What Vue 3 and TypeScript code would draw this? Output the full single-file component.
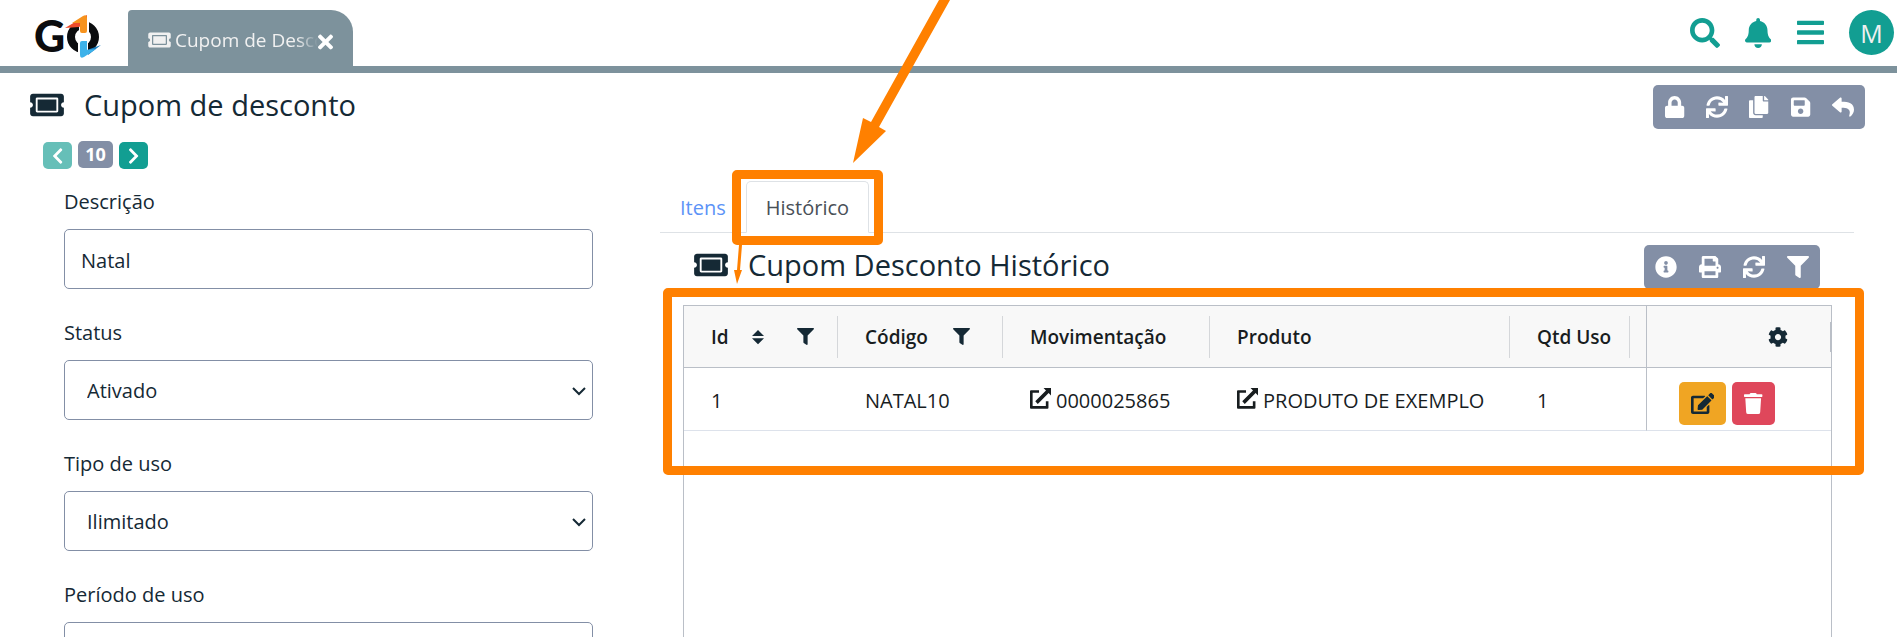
<script setup lang="ts">
import { ref } from 'vue'

interface Icon { w: number; d: string }

const icons: Record<string, Icon> = {
  ticket: { w: 576, d: 'M128 160h320v192H128V160zm400 96c0 26.51 21.49 48 48 48v96c0 26.51-21.49 48-48 48H48c-26.51 0-48-21.49-48-48v-96c26.51 0 48-21.49 48-48s-21.49-48-48-48v-96c0-26.51 21.49-48 48-48h480c26.51 0 48 21.49 48 48v96c-26.51 0-48 21.49-48 48zm-48-104c0-13.255-10.745-24-24-24H120c-13.255 0-24 10.745-24 24v208c0 13.255 10.745 24 24 24h336c13.255 0 24-10.745 24-24V152z' },
  close: { w: 352, d: 'M242.72 256l100.07-100.07c12.28-12.28 12.28-32.19 0-44.48l-22.24-22.24c-12.28-12.28-32.19-12.28-44.48 0L176 189.28 75.93 89.21c-12.28-12.28-32.19-12.28-44.48 0L9.21 111.45c-12.28 12.28-12.28 32.19 0 44.48L109.28 256 9.21 356.07c-12.28 12.28-12.28 32.19 0 44.48l22.24 22.24c12.28 12.28 32.2 12.28 44.48 0L176 322.72l100.07 100.07c12.28 12.28 32.2 12.28 44.48 0l22.24-22.24c12.28-12.28 12.28-32.19 0-44.48L242.72 256z' },
  search: { w: 512, d: 'M505 442.7L405.3 343c-4.5-4.5-10.6-7-17-7H372c27.6-35.3 44-79.7 44-128C416 93.1 322.9 0 208 0S0 93.1 0 208s93.1 208 208 208c48.3 0 92.7-16.4 128-44v16.3c0 6.4 2.5 12.5 7 17l99.7 99.7c9.4 9.4 24.6 9.4 33.9 0l28.3-28.3c9.4-9.4 9.4-24.6.1-34zM208 336c-70.7 0-128-57.2-128-128 0-70.7 57.2-128 128-128 70.7 0 128 57.2 128 128 0 70.7-57.2 128-128 128z' },
  bell: { w: 448, d: 'M224 512c35.32 0 63.97-28.65 63.97-64H160.03c0 35.35 28.65 64 63.97 64zm215.39-149.71c-19.32-20.76-55.47-51.99-55.47-154.29 0-77.7-54.48-139.9-127.94-155.16V32c0-17.67-14.32-32-31.98-32s-31.98 14.33-31.98 32v20.84C118.56 68.1 64.08 130.3 64.08 208c0 102.3-36.15 133.53-55.47 154.29-6 6.45-8.66 14.16-8.61 21.71.11 16.4 12.98 32 32.1 32h383.8c19.12 0 32-15.6 32.1-32 .05-7.55-2.61-15.27-8.61-21.71z' },
  bars: { w: 448, d: 'M16 132h416c8.837 0 16-7.163 16-16V76c0-8.837-7.163-16-16-16H16C7.163 60 0 67.163 0 76v40c0 8.837 7.163 16 16 16zm0 160h416c8.837 0 16-7.163 16-16v-40c0-8.837-7.163-16-16-16H16c-8.837 0-16 7.163-16 16v40c0 8.837 7.163 16 16 16zm0 160h416c8.837 0 16-7.163 16-16v-40c0-8.837-7.163-16-16-16H16c-8.837 0-16 7.163-16 16v40c0 8.837 7.163 16 16 16z' },
  lock: { w: 448, d: 'M400 224h-24v-72C376 68.2 307.8 0 224 0S72 68.2 72 152v72H48c-26.5 0-48 21.5-48 48v192c0 26.5 21.5 48 48 48h352c26.5 0 48-21.5 48-48V272c0-26.5-21.5-48-48-48zm-104 0H152v-72c0-39.7 32.3-72 72-72s72 32.3 72 72v72z' },
  sync: { w: 512, d: 'M440.65 12.57l4 82.77A247.16 247.16 0 0 0 255.83 8C134.73 8 33.91 94.92 12.29 209.82A12 12 0 0 0 24.09 224h49.05a12 12 0 0 0 11.67-9.26 175.91 175.91 0 0 1 317-56.94l-101.46-4.86a12 12 0 0 0-12.57 12v47.41a12 12 0 0 0 12 12H500a12 12 0 0 0 12-12V12a12 12 0 0 0-12-12h-47.37a12 12 0 0 0-11.98 12.57zM255.83 432a175.61 175.61 0 0 1-146-77.8l101.8 4.87a12 12 0 0 0 12.57-12v-47.4a12 12 0 0 0-12-12H12a12 12 0 0 0-12 12V500a12 12 0 0 0 12 12h47.35a12 12 0 0 0 12-12.6l-4.15-82.57A247.17 247.17 0 0 0 255.83 504c121.11 0 221.93-86.92 243.55-201.82a12 12 0 0 0-11.8-14.18h-49.05a12 12 0 0 0-11.67 9.26A175.86 175.86 0 0 1 255.83 432z' },
  copy: { w: 448, d: 'M320 448v40c0 13.255-10.745 24-24 24H24c-13.255 0-24-10.745-24-24V120c0-13.255 10.745-24 24-24h72v296c0 30.879 25.121 56 56 56h168zm0-344V0H152c-13.255 0-24 10.745-24 24v368c0 13.255 10.745 24 24 24h272c13.255 0 24-10.745 24-24V128H344c-13.2 0-24-10.8-24-24zm120.971-31.029L375.029 7.029A24 24 0 0 0 358.059 0H352v96h96v-6.059a24 24 0 0 0-7.029-16.97z' },
  save: { w: 448, d: 'M433.941 129.941l-83.882-83.882A48 48 0 0 0 316.118 32H48C21.49 32 0 53.49 0 80v352c0 26.51 21.49 48 48 48h352c26.51 0 48-21.49 48-48V163.882a48 48 0 0 0-14.059-33.941zM224 416c-35.346 0-64-28.654-64-64 0-35.346 28.654-64 64-64s64 28.654 64 64c0 35.346-28.654 64-64 64zm96-304.52V212c0 6.627-5.373 12-12 12H76c-6.627 0-12-5.373-12-12V108c0-6.627 5.373-12 12-12h228.52c3.183 0 6.235 1.264 8.485 3.515l3.48 3.48A11.996 11.996 0 0 1 320 111.48z' },
  reply: { w: 512, d: 'M8.309 189.836L184.313 37.851C199.719 24.546 224 35.347 224 56.015v80.053c160.629 1.839 288 34.032 288 186.258 0 61.441-39.581 122.309-83.333 154.132-13.653 9.931-33.111-2.533-28.077-18.631 45.344-145.012-21.507-183.51-176.59-185.742V360c0 20.7-24.3 31.453-39.687 18.164l-176.004-152c-11.071-9.562-11.086-26.753 0-36.328z' },
  left: { w: 320, d: 'M34.52 239.03L228.87 44.69c9.37-9.37 24.57-9.37 33.94 0l22.67 22.67c9.36 9.36 9.37 24.52.04 33.9L131.49 256l154.02 154.75c9.34 9.38 9.32 24.54-.04 33.9l-22.67 22.67c-9.37 9.37-24.57 9.37-33.94 0L34.52 272.97c-9.37-9.37-9.37-24.57 0-33.94z' },
  right: { w: 320, d: 'M285.476 272.971L91.132 467.314c-9.373 9.373-24.569 9.373-33.941 0l-22.667-22.667c-9.357-9.357-9.375-24.522-.04-33.901L188.505 256 34.484 101.255c-9.335-9.379-9.317-24.544.04-33.901l22.667-22.667c9.373-9.373 24.569-9.373 33.941 0L285.475 239.03c9.373 9.372 9.373 24.568.001 33.941z' },
  info: { w: 512, d: 'M256 8C119.043 8 8 119.083 8 256c0 136.997 111.043 248 248 248s248-111.003 248-248C504 119.083 392.957 8 256 8zm0 110c23.196 0 42 18.804 42 42s-18.804 42-42 42-42-18.804-42-42 18.804-42 42-42zm56 254c0 6.627-5.373 12-12 12h-88c-6.627 0-12-5.373-12-12v-24c0-6.627 5.373-12 12-12h12v-64h-12c-6.627 0-12-5.373-12-12v-24c0-6.627 5.373-12 12-12h64c6.627 0 12 5.373 12 12v100h12c6.627 0 12 5.373 12 12v24z' },
  print: { w: 512, d: 'M448 192V77.25c0-8.49-3.37-16.62-9.37-22.63L393.37 9.37c-6-6-14.14-9.37-22.63-9.37H96C78.33 0 64 14.33 64 32v160c-35.35 0-64 28.65-64 64v112c0 8.84 7.16 16 16 16h48v96c0 17.67 14.33 32 32 32h320c17.67 0 32-14.33 32-32v-96h48c8.84 0 16-7.16 16-16V256c0-35.35-28.65-64-64-64zm-64 256H128v-96h256v96zm0-224H128V64h192v48c0 8.84 7.16 16 16 16h48v96zm48 72c-13.25 0-24-10.75-24-24 0-13.26 10.75-24 24-24s24 10.74 24 24c0 13.25-10.75 24-24 24z' },
  filter: { w: 512, d: 'M487.976 0H24.028C2.71 0-8.047 25.866 7.058 40.971L192 225.941V432c0 7.831 3.821 15.17 10.237 19.662l80 55.98C298.02 518.69 320 507.493 320 487.98V225.941l184.947-184.97C520.021 25.896 509.338 0 487.976 0z' },
  cog: { w: 512, d: 'M487.4 315.7l-42.6-24.6c4.3-23.2 4.3-47 0-70.2l42.6-24.6c4.9-2.8 7.1-8.6 5.5-14-11.1-35.6-30-67.8-54.7-94.6-3.8-4.1-10-5.1-14.8-2.3L380.8 110c-17.9-15.4-38.5-27.3-60.8-35.1V25.8c0-5.6-3.9-10.5-9.4-11.7-36.7-8.2-74.3-7.8-109.2 0-5.5 1.2-9.4 6.1-9.4 11.7V75c-22.2 7.9-42.8 19.8-60.8 35.1L88.7 85.5c-4.9-2.8-11-1.9-14.8 2.3-24.7 26.7-43.6 58.9-54.7 94.6-1.7 5.4.6 11.2 5.5 14L67.3 221c-4.3 23.2-4.3 47 0 70.2l-42.6 24.6c-4.9 2.8-7.1 8.6-5.5 14 11.1 35.6 30 67.8 54.7 94.6 3.8 4.1 10 5.1 14.8 2.3l42.6-24.6c17.9 15.4 38.5 27.3 60.8 35.1v49.2c0 5.6 3.9 10.5 9.4 11.7 36.7 8.2 74.3 7.8 109.2 0 5.5-1.2 9.4-6.1 9.4-11.7v-49.2c22.2-7.9 42.8-19.8 60.8-35.1l42.6 24.6c4.9 2.8 11 1.9 14.8-2.3 24.7-26.7 43.6-58.9 54.7-94.6 1.5-5.5-.7-11.3-5.6-14.1zM256 336c-44.1 0-80-35.9-80-80s35.9-80 80-80 80 35.9 80 80-35.9 80-80 80z' },
  edit: { w: 576, d: 'M402.6 83.2l90.2 90.2c3.8 3.8 3.8 10 0 13.8L274.4 405.6l-92.8 10.3c-12.4 1.4-22.9-9.1-21.5-21.5l10.3-92.8L388.8 83.2c3.8-3.8 10-3.8 13.8 0zm162-22.9l-48.8-48.8c-15.2-15.2-39.9-15.2-55.2 0l-35.4 35.4c-3.8 3.8-3.8 10 0 13.8l90.2 90.2c3.8 3.8 10 3.8 13.8 0l35.4-35.4c15.2-15.3 15.2-40 0-55.2zM384 346.2V448H64V128h229.8c3.2 0 6.2-1.3 8.5-3.5l40-40c7.6-7.6 2.2-20.5-8.5-20.5H48C21.5 64 0 85.5 0 112v352c0 26.5 21.5 48 48 48h352c26.5 0 48-21.5 48-48V306.2c0-10.7-12.9-16-20.5-8.5l-40 40c-2.2 2.3-3.5 5.3-3.5 8.5z' },
  trash: { w: 448, d: 'M432 32H312l-9.4-18.7A24 24 0 0 0 281.1 0H166.8a23.72 23.72 0 0 0-21.4 13.3L136 32H16A16 16 0 0 0 0 48v32a16 16 0 0 0 16 16h416a16 16 0 0 0 16-16V48a16 16 0 0 0-16-16zM53.2 467a48 48 0 0 0 47.9 45h245.8a48 48 0 0 0 47.9-45L416 128H32z' },
  external: { w: 512, d: 'M0 80Q0 56 24 56H220V118H64V440H386V320H450V480Q450 504 426 504H24Q0 504 0 480zM330 0H512V182L454 124L190 388L128 326L390 62z' },
  sort: { w: 320, d: 'M0 226L160 66L320 226zM0 290L160 450L320 290z' },
}

const vb = (name: string) => `0 0 ${icons[name].w} 512`

const topActions = [
  { icon: 'search', label: 'Pesquisar' },
  { icon: 'bell', label: 'Notificações' },
  { icon: 'bars', label: 'Menu' },
]
const pageActions = [
  { icon: 'lock', label: 'Bloquear' },
  { icon: 'sync', label: 'Atualizar' },
  { icon: 'copy', label: 'Copiar' },
  { icon: 'save', label: 'Salvar' },
  { icon: 'reply', label: 'Voltar' },
]
const gridActions = [
  { icon: 'info', label: 'Informações' },
  { icon: 'print', label: 'Imprimir' },
  { icon: 'sync', label: 'Atualizar' },
  { icon: 'filter', label: 'Filtrar' },
]

const descricao = ref('Natal')
const status = ref('Ativado')
const tipo = ref('Ilimitado')
const periodo = ref('')
const rows = [{ id: 1, codigo: 'NATAL10', mov: '0000025865', produto: 'PRODUTO DE EXEMPLO', uso: 1 }]
</script>

<template>
  <div class="page">
    <header class="topbar">
      <a href="#" class="logo" aria-label="GO">
        <svg width="70" height="46" viewBox="0 0 70 46">
          <text x="0" y="37" class="logo-g">G</text>
          <circle cx="49" cy="22" r="12" fill="none" stroke="#0b0c0e" stroke-width="8" />
          <path d="M45 0h10v20H45zM44 24h10v22H44z" fill="#fff" />
          <path d="M31 13L53 0V8L45 12z" fill="#ee4b2b" />
          <path d="M38 8L49 1Q53 -1 53 3V16Q53 18 51 18H48Q46 18 46 16V8z" fill="#f7931e" />
          <path d="M53 35L67 30L54 40z" fill="#1c7fc0" />
          <path d="M46 28Q46 26 48 26H53V35L62 34L50 42Q46 44 46 40z" fill="#3db2ea" />
        </svg>
      </a>
      <div class="doc-tab">
        <svg class="i-tab" :viewBox="vb('ticket')"><path :d="icons.ticket.d" /></svg>
        <span class="doc-title">Cupom de Desconto</span>
        <button class="close" aria-label="Fechar"><svg :viewBox="vb('close')"><path :d="icons.close.d" /></svg></button>
      </div>
      <nav class="top-actions">
        <button v-for="a in topActions" :key="a.icon" :class="'act-' + a.icon" :aria-label="a.label">
          <svg :viewBox="vb(a.icon)"><path :d="icons[a.icon].d" /></svg>
        </button>
        <button class="avatar" aria-label="Usuário">M</button>
      </nav>
    </header>

    <div class="title-row">
      <svg class="i-title" :viewBox="vb('ticket')"><path :d="icons.ticket.d" /></svg>
      <h1>Cupom de desconto</h1>
      <div class="toolbar">
        <button v-for="a in pageActions" :key="a.icon" :aria-label="a.label">
          <svg :viewBox="vb(a.icon)"><path :d="icons[a.icon].d" /></svg>
        </button>
      </div>
    </div>

    <div class="pager">
      <button class="prev" aria-label="Anterior"><svg :viewBox="vb('left')"><path :d="icons.left.d" /></svg></button>
      <span class="count">10</span>
      <button class="next" aria-label="Próximo"><svg :viewBox="vb('right')"><path :d="icons.right.d" /></svg></button>
    </div>

    <main class="columns">
      <form class="form" @submit.prevent>
        <div class="field">
          <label for="descricao">Descrição</label>
          <input id="descricao" v-model="descricao" type="text" />
        </div>
        <div class="field">
          <label for="status">Status</label>
          <div class="select">
            <select id="status" v-model="status"><option>Ativado</option><option>Desativado</option></select>
            <svg viewBox="0 0 14 10"><path d="M1 2l6 6 6-6" /></svg>
          </div>
        </div>
        <div class="field">
          <label for="tipo">Tipo de uso</label>
          <div class="select">
            <select id="tipo" v-model="tipo"><option>Ilimitado</option><option>Limitado</option></select>
            <svg viewBox="0 0 14 10"><path d="M1 2l6 6 6-6" /></svg>
          </div>
        </div>
        <div class="field">
          <label for="periodo">Período de uso</label>
          <input id="periodo" v-model="periodo" type="text" />
        </div>
      </form>

      <section class="detail">
        <div class="tabs" role="tablist">
          <button class="tab" role="tab" aria-selected="false">Itens</button>
          <div class="tab-wrap">
            <button class="tab active" role="tab" aria-selected="true">Histórico</button>
            <div class="mark mark-tab"></div>
            <svg class="arrows" width="240" height="300" viewBox="0 0 240 300" aria-hidden="true">
              <path d="M193 0H204L133 127L140 131L107 163L117 118L125 122z" />
              <path d="M-7 245H-4L-6 270H-4L-9 284L-12 270H-9z" />
            </svg>
          </div>
        </div>

        <div class="sub-row">
          <svg class="i-title" :viewBox="vb('ticket')"><path :d="icons.ticket.d" /></svg>
          <h2>Cupom Desconto Histórico</h2>
          <div class="toolbar wide">
            <button v-for="a in gridActions" :key="a.icon" :aria-label="a.label">
              <svg :viewBox="vb(a.icon)"><path :d="icons[a.icon].d" /></svg>
            </button>
          </div>
        </div>

        <div class="grid">
          <div class="mark mark-grid"></div>
          <table>
            <colgroup>
              <col class="c-id" /><col class="c-cod" /><col class="c-mov" /><col class="c-prod" /><col class="c-uso" /><col /><col class="c-act" />
            </colgroup>
            <thead>
              <tr>
                <th><div class="head"><span>Id</span>
                  <svg class="i-sort" :viewBox="vb('sort')"><path :d="icons.sort.d" /></svg>
                  <svg class="i-filter end" :viewBox="vb('filter')"><path :d="icons.filter.d" /></svg></div></th>
                <th><div class="head"><span>Código</span>
                  <svg class="i-filter end" :viewBox="vb('filter')"><path :d="icons.filter.d" /></svg></div></th>
                <th><div class="head"><span>Movimentação</span></div></th>
                <th><div class="head"><span>Produto</span></div></th>
                <th><div class="head"><span>Qtd Uso</span></div></th>
                <th class="blank"></th>
                <th class="pinned">
                  <div class="config"><button aria-label="Configurar"><svg :viewBox="vb('cog')"><path :d="icons.cog.d" /></svg></button><i></i></div>
                </th>
              </tr>
            </thead>
            <tbody>
              <tr v-for="r in rows" :key="r.id">
                <td>{{ r.id }}</td>
                <td>{{ r.codigo }}</td>
                <td><a href="#" class="link"><svg :viewBox="vb('external')"><path :d="icons.external.d" /></svg>{{ r.mov }}</a></td>
                <td><a href="#" class="link"><svg :viewBox="vb('external')"><path :d="icons.external.d" /></svg>{{ r.produto }}</a></td>
                <td>{{ r.uso }}</td>
                <td class="blank"></td>
                <td class="pinned">
                  <div class="row-actions">
                    <button class="edit" aria-label="Editar"><svg :viewBox="vb('edit')"><path :d="icons.edit.d" /></svg></button>
                    <button class="delete" aria-label="Excluir"><svg :viewBox="vb('trash')"><path :d="icons.trash.d" /></svg></button>
                  </div>
                </td>
              </tr>
            </tbody>
          </table>
        </div>
      </section>
    </main>
  </div>
</template>

<style>
body { margin: 0; background: #fff; }
</style>

<style scoped>
* { box-sizing: border-box; }
.page {
  display: flex;
  flex-direction: column;
  position: relative;
  height: 100vh;
  overflow: hidden;
  font-family: "Open Sans", "Noto Sans", sans-serif;
  font-size: 20px;
  line-height: 30px;
  color: #152935;
}
svg { fill: currentColor; display: block; flex: none; }
button { font: inherit; color: inherit; border: 0; background: none; padding: 0; cursor: pointer; display: flex; align-items: center; justify-content: center; }

.topbar { display: flex; height: 73px; flex: none; border-bottom: 7px solid #7d929c; padding-left: 34px; }
.logo { width: 94px; padding-top: 15px; }
.logo svg { overflow: visible; }
.logo-g { font: 900 43px Lato, sans-serif; fill: #0b0c0e; }
.doc-tab { display: flex; align-items: center; width: 225px; height: 56px; margin-top: 10px; padding: 3px 20px 0; background: #7d929c; border-radius: 4px 22px 0 0; color: #f1f1f1; }
.i-tab { width: 23px; height: 20px; }
.doc-title { flex: 1; min-width: 0; margin-left: 4px; overflow: hidden; white-space: nowrap; font-size: 19px; -webkit-mask-image: linear-gradient(90deg, #000 85%, transparent); mask-image: linear-gradient(90deg, #000 85%, transparent); }
.close { color: #fff; margin-top: 4px; }
.close svg { width: 15px; height: 22px; }
.top-actions { display: flex; align-items: center; margin-left: auto; padding: 0 3px 1px 0; color: #129e92; }
.top-actions svg { height: 30px; }
.act-search { margin-right: 25px; }
.act-bell { margin-right: 26px; }
.act-bars { margin-right: 25px; }
.top-actions .act-bars svg { height: 31px; }
.avatar { width: 45px; height: 45px; border-radius: 50%; background: #129e92; color: #f0f0f0; font-size: 25px; }

.title-row { display: flex; align-items: center; margin-top: 12px; height: 44px; padding: 0 32px 0 30px; flex: none; }
.i-title { width: 34px; height: 30px; }
h1, h2 { margin: 0 0 0 20px; font-size: 29px; line-height: 36px; font-weight: 500; }
.title-row h1, .title-row > .i-title, .sub-row h2, .sub-row > .i-title { margin-bottom: 5px; }
.toolbar { display: flex; margin-left: auto; height: 44px; padding: 0 1px; background: #838fa6; border-radius: 5px; color: #fff; }
.toolbar button { width: 42px; }
.toolbar svg { height: 22px; }
.toolbar.wide { padding: 0; }
.toolbar.wide button { width: 44px; }

.pager { display: flex; gap: 6px; align-items: flex-end; height: 28px; margin: 12px 0 0 43px; flex: none; color: #fff; font-weight: 700; }
.pager button { width: 29px; height: 27px; border-radius: 5px; background: #129e92; }
.pager .prev { background: #66bfb8; }
.pager svg { height: 18px; }
.count { width: 35px; height: 27px; line-height: 27px; font-size: 18px; text-align: center; border-radius: 5px; background: #838fa6; align-self: flex-start; }

.columns { display: grid; grid-template-columns: minmax(0, 529fr) minmax(0, 1194fr); gap: 67px; padding: 12px 43px 0 64px; flex: 1; }
.form { padding-top: 6px; display: flex; flex-direction: column; gap: 29px; }
.field { display: flex; flex-direction: column; gap: 12px; }
.field input, .field select { width: 100%; height: 60px; border: 1px solid #838fa6; border-radius: 5px; background: #fff; font: inherit; color: inherit; padding: 2px 16px 0; appearance: none; }
.field select { padding-left: 22px; }
.select { position: relative; }
.select svg { position: absolute; right: 7px; top: 26px; width: 14px; height: 10px; fill: none; stroke: #152935; stroke-width: 2; pointer-events: none; }

.detail { display: flex; flex-direction: column; }
.tabs { display: flex; height: 52px; border-bottom: 1px solid #dee2e6; }
.tab-wrap { position: relative; display: flex; }
.tab { height: 52px; padding: 2px 19px 0; border: 1px solid transparent; color: #5c93f7; }
.tab.active { border-color: #dee2e6 #dee2e6 #fff; border-radius: 5px 5px 0 0; background: #fff; color: #495057; }
.mark { position: absolute; border: 9px solid #ff8000; border-radius: 5px; pointer-events: none; z-index: 2; }
.mark-tab { inset: -11px -14px -13px -14px; }
.arrows { position: absolute; left: 0; top: -181px; overflow: visible; fill: #ff8000; pointer-events: none; z-index: 3; }

.sub-row { display: flex; align-items: center; height: 44px; margin-top: 12px; padding: 0 34px; }
.grid { position: relative; flex: 1; margin: 16px 22px 0 23px; border: 1px solid #babfc7; border-bottom: 0; color: #181d1f; }
.mark-grid { inset: -18px -33px auto -21px; height: 187px; }
table { width: 100%; table-layout: fixed; border-collapse: separate; border-spacing: 0; }
.c-id { width: 154px; }
.c-cod { width: 165px; }
.c-mov { width: 207px; }
.c-prod { width: 300px; }
.c-uso { width: 120px; }
.c-act { width: 185px; }
th { height: 62px; padding: 0; background: #f8f8f8; border-bottom: 1px solid #babfc7; font-size: 19px; font-weight: 600; text-align: left; }
.head { display: flex; align-items: center; height: 42px; padding: 0 0 0 27px; border-right: 1px solid #d5d7da; white-space: nowrap; }
.head svg { color: #152935; }
.i-sort { width: 12px; height: 20px; margin-left: 23px; }
.i-filter { width: 17px; height: 17px; }
.end { margin-left: auto; margin-right: 23px; }
th:nth-child(2) .end { margin-right: 32px; }
.pinned { border-left: 1px solid #babfc7; }
.config { display: flex; align-items: center; justify-content: flex-end; gap: 42px; color: #152935; }
.config svg { width: 20px; height: 20px; }
.config i { width: 1px; height: 30px; background: #babfc7; }
td { height: 63px; padding: 4px 0 0 27px; border-bottom: 1px solid #dde2eb; white-space: nowrap; }
.link { display: flex; align-items: center; gap: 5px; color: inherit; text-decoration: none; }
.link svg { width: 21px; height: 21px; margin-bottom: 5px; }
td.blank, td.pinned { padding: 0; }
.row-actions { display: flex; gap: 6px; padding: 8px 0 0 32px; }
.row-actions button { height: 43px; border-radius: 5px; }
.row-actions svg { height: 21px; }
.edit { width: 47px; background: #f0a523; color: #152935; }
.delete { width: 43px; background: #df475b; color: #fff; }
</style>
